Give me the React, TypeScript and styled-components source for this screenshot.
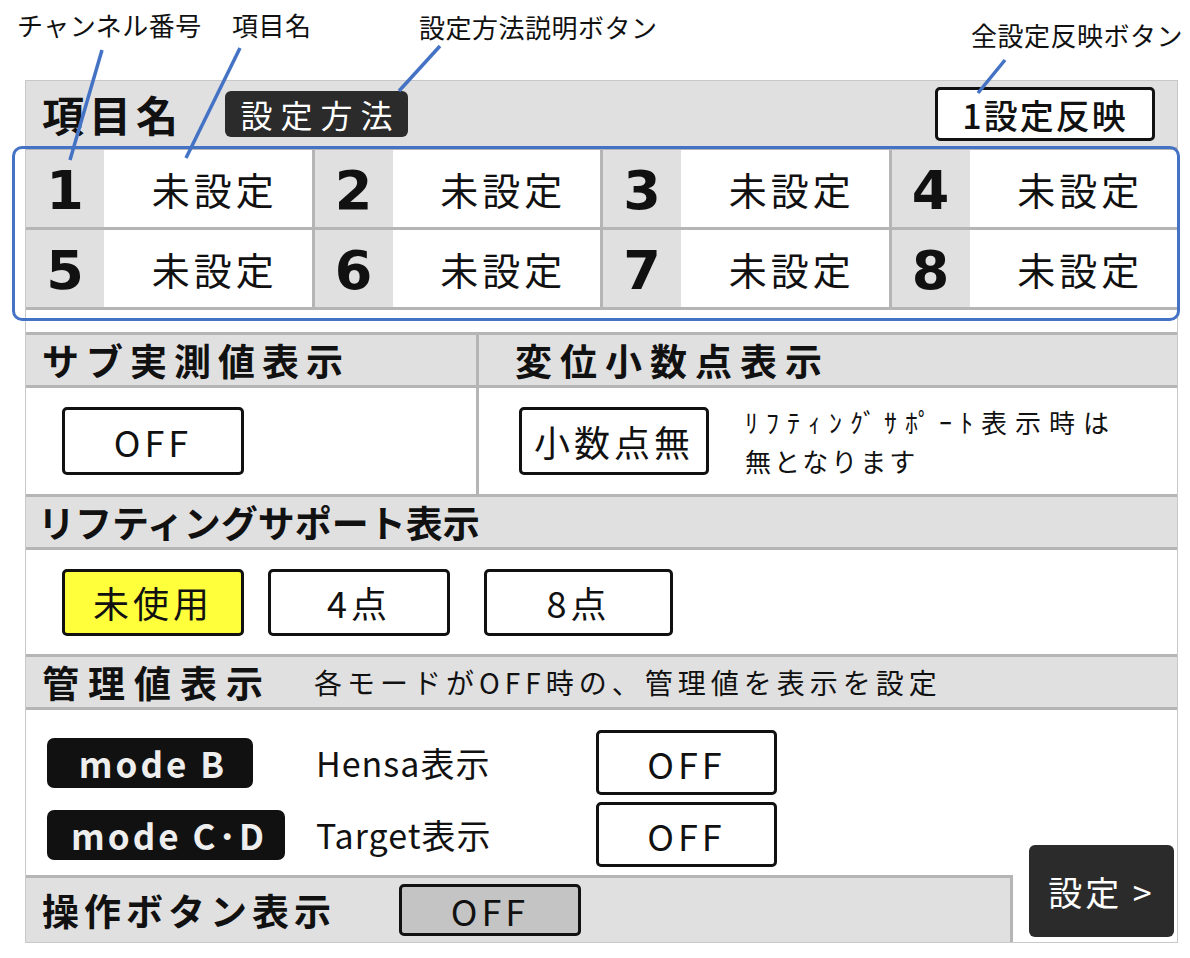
import React from "react";
import styled, { createGlobalStyle } from "styled-components";

const GlobalStyle = createGlobalStyle`
  html, body {
    margin: 0;
    padding: 0;
    background: #fff;
  }
  body {
    font-family: "Noto Sans CJK JP", "Noto Sans", sans-serif;
    color: #111;
  }
`;

const LINE = "#b5b5b5";
const BAR = "#e0e0e0";

const Page = styled.div`
  position: relative;
  width: 1190px;
  height: 958px;
  padding: 80px 0 0 25px;
  box-sizing: border-box;
  overflow: hidden;
`;

const Panel = styled.div`
  width: 1153px;
  border: 1px solid #c8c8c8;
  box-sizing: border-box;
  background: #fff;
`;

/* ---------- top bar ---------- */

const TopBar = styled.div`
  height: 66px;
  background: ${BAR};
  display: flex;
  align-items: center;
  padding: 0 22px 0 16px;
`;

const Title = styled.div<{ $spacing?: number }>`
  font-size: 37px;
  font-weight: 700;
  letter-spacing: ${(p) => p.$spacing ?? 7}px;
  line-height: 1;
  white-space: nowrap;
`;

const BigTitle = styled(Title)`
  font-size: 42px;
  letter-spacing: 5px;
`;

const DarkButton = styled.div`
  background: #2b2b2b;
  color: #fff;
  border-radius: 6px;
  display: flex;
  align-items: center;
  justify-content: center;
  white-space: nowrap;
`;

const HelpButton = styled(DarkButton)`
  margin-left: 42px;
  height: 46px;
  width: 183px;
  font-size: 32px;
  letter-spacing: 8px;
  padding-left: 8px;
  box-sizing: border-box;
`;

const ApplyButton = styled.div`
  margin-left: auto;
  width: 220px;
  height: 54px;
  box-sizing: border-box;
  border: 3px solid #111;
  border-radius: 5px;
  background: #fff;
  display: flex;
  align-items: center;
  justify-content: center;
  font-size: 34px;
  font-weight: 500;
  letter-spacing: 2px;
`;

/* ---------- channel grid ---------- */

const ChannelGrid = styled.div`
  display: grid;
  grid-template-columns: repeat(4, 1fr);
  grid-auto-rows: 77px;
  gap: 3px;
  background: ${LINE};
  border-top: 3px solid ${LINE};
  border-bottom: 3px solid ${LINE};
`;

const Channel = styled.div`
  display: flex;
`;

const ChannelNo = styled.div`
  width: 78px;
  background: ${BAR};
  display: flex;
  align-items: center;
  justify-content: center;
  padding-top: 4px;
  box-sizing: border-box;
  font-family: "DejaVu Sans", sans-serif;
  font-weight: 700;
  font-size: 54px;
`;

const ChannelName = styled.div`
  flex: 1;
  background: #fff;
  display: flex;
  align-items: center;
  justify-content: center;
  padding-left: 14px;
  font-size: 38px;
  letter-spacing: 4px;
`;

const Gap = styled.div`
  height: 22px;
`;

/* ---------- sections ---------- */

const SectionHeader = styled.div<{ $pad?: number }>`
  height: 50px;
  background: ${BAR};
  border-top: 3px solid ${LINE};
  border-bottom: 3px solid ${LINE};
  display: flex;
  align-items: center;
  padding-left: ${(p) => p.$pad ?? 16}px;
`;

const HeaderNote = styled.div`
  margin-left: 42px;
  font-size: 28px;
  letter-spacing: 5px;
  white-space: nowrap;
`;

const Split = styled.div`
  display: flex;
`;

const Column = styled.div<{ $width?: number; $divider?: boolean }>`
  display: flex;
  flex-direction: column;
  ${(p) => (p.$width ? `width: ${p.$width}px;` : "flex: 1;")}
  ${(p) => (p.$divider ? `border-left: 3px solid ${LINE};` : "")}
`;

const Body = styled.div<{ $height: number; $pad: number; $gap?: number }>`
  height: ${(p) => p.$height}px;
  display: flex;
  align-items: center;
  padding-left: ${(p) => p.$pad}px;
  gap: ${(p) => p.$gap ?? 0}px;
`;

const Toggle = styled.div<{ $w: number; $h?: number; $tone?: "yellow" | "gray" }>`
  width: ${(p) => p.$w}px;
  height: ${(p) => p.$h ?? 68}px;
  box-sizing: border-box;
  border: 3px solid #111;
  border-radius: 5px;
  background: ${(p) =>
    p.$tone === "yellow" ? "#ffff3c" : p.$tone === "gray" ? "#c4c4c4" : "#fff"};
  display: flex;
  align-items: center;
  justify-content: center;
  font-size: 36px;
  letter-spacing: 4px;
  white-space: nowrap;
  flex-shrink: 0;
`;

const Note = styled.div`
  margin-left: 36px;
  display: flex;
  flex-direction: column;
`;

const NoteLine = styled.div<{ $spacing: number }>`
  font-size: 26px;
  line-height: 39px;
  letter-spacing: ${(p) => p.$spacing}px;
  white-space: nowrap;
`;

/* ---------- management ---------- */

const ManageArea = styled.div`
  display: flex;
`;

const ManageLeft = styled.div`
  flex: 1;
  display: flex;
  flex-direction: column;
`;

const ManageRows = styled.div`
  height: 165px;
  box-sizing: border-box;
  padding: 20px 0 0 21px;
  display: grid;
  grid-template-columns: 269px 280px 181px;
  grid-auto-rows: 65px;
  row-gap: 7px;
  align-items: center;
`;

const ModeTag = styled.div<{ $w: number }>`
  justify-self: start;
  width: ${(p) => p.$w}px;
  height: 50px;
  box-sizing: border-box;
  padding-left: 6px;
  background: #111;
  color: #eee;
  border-radius: 7px;
  display: flex;
  align-items: center;
  justify-content: center;
  font-size: 35px;
  font-weight: 700;
  letter-spacing: 3px;
  white-space: nowrap;
`;

const RowLabel = styled.div`
  font-size: 34px;
  letter-spacing: 1px;
  white-space: nowrap;
`;

const BottomBar = styled.div`
  height: 64px;
  background: ${BAR};
  border-top: 3px solid ${LINE};
  border-right: 3px solid ${LINE};
  display: flex;
  align-items: center;
  padding-left: 16px;
  gap: 63px;
`;

const ManageRight = styled.div`
  width: 164px;
  display: flex;
  align-items: flex-end;
  justify-content: flex-end;
  padding: 0 3px 5px 0;
  box-sizing: border-box;
`;

const SubmitButton = styled(DarkButton)`
  width: 145px;
  height: 92px;
  font-size: 34px;
  letter-spacing: 3px;
`;

/* ---------- callouts ---------- */

const CalloutText = styled.div<{ $x: number; $y: number }>`
  position: absolute;
  left: ${(p) => p.$x}px;
  top: ${(p) => p.$y}px;
  font-size: 26px;
  letter-spacing: 0.5px;
  line-height: 30px;
  color: #111;
  white-space: nowrap;
`;

const CalloutFrame = styled.div`
  position: absolute;
  left: 12px;
  top: 146px;
  width: 1168px;
  height: 175px;
  box-sizing: border-box;
  border: 3.5px solid #4472c4;
  border-radius: 10px;
  pointer-events: none;
`;

const CalloutLines = styled.svg`
  position: absolute;
  left: 0;
  top: 0;
  pointer-events: none;
`;

const callouts = [
  { text: "チャンネル番号", x: 17, y: 10 },
  { text: "項目名", x: 232, y: 10 },
  { text: "設定方法説明ボタン", x: 419, y: 12 },
  { text: "全設定反映ボタン", x: 971, y: 20 },
];

const leaders = [
  [102, 50, 70, 160],
  [240, 48, 186, 158],
  [440, 46, 399, 91],
  [1005, 60, 978, 93],
];

const channels = [1, 2, 3, 4, 5, 6, 7, 8];

export default function App() {
  return (
    <>
      <GlobalStyle />
      <Page>
        <Panel>
          <TopBar>
            <BigTitle>項目名</BigTitle>
            <HelpButton>設定方法</HelpButton>
            <ApplyButton>1設定反映</ApplyButton>
          </TopBar>

          <ChannelGrid>
            {channels.map((n) => (
              <Channel key={n}>
                <ChannelNo>{n}</ChannelNo>
                <ChannelName>未設定</ChannelName>
              </Channel>
            ))}
          </ChannelGrid>

          <Gap />

          <Split>
            <Column $width={450}>
              <SectionHeader>
                <Title>サブ実測値表示</Title>
              </SectionHeader>
              <Body $height={106} $pad={36}>
                <Toggle $w={182}>OFF</Toggle>
              </Body>
            </Column>
            <Column $divider>
              <SectionHeader $pad={36}>
                <Title $spacing={8}>変位小数点表示</Title>
              </SectionHeader>
              <Body $height={106} $pad={40}>
                <Toggle $w={190}>小数点無</Toggle>
                <Note>
                  <NoteLine $spacing={8}>ﾘﾌﾃｨﾝｸﾞｻﾎﾟｰﾄ表示時は</NoteLine>
                  <NoteLine $spacing={3}>無となります</NoteLine>
                </Note>
              </Body>
            </Column>
          </Split>

          <SectionHeader $pad={12}>
            <Title $spacing={0}>リフティングサポート表示</Title>
          </SectionHeader>
          <Body $height={104} $pad={36} $gap={24}>
            <Toggle $w={182} $h={67} $tone="yellow">
              未使用
            </Toggle>
            <Toggle $w={182} $h={67}>
              4点
            </Toggle>
            <Toggle $w={189} $h={67} style={{ marginLeft: 10 }}>
              8点
            </Toggle>
          </Body>

          <SectionHeader>
            <Title $spacing={9}>管理値表示</Title>
            <HeaderNote>各モードがOFF時の、管理値を表示を設定</HeaderNote>
          </SectionHeader>
          <ManageArea>
            <ManageLeft>
              <ManageRows>
                <ModeTag $w={206}>mode B</ModeTag>
                <RowLabel>Hensa表示</RowLabel>
                <Toggle $w={181} $h={65}>
                  OFF
                </Toggle>
                <ModeTag $w={238}>mode C･D</ModeTag>
                <RowLabel>Target表示</RowLabel>
                <Toggle $w={181} $h={65}>
                  OFF
                </Toggle>
              </ManageRows>
              <BottomBar>
                <Title $spacing={5}>操作ボタン表示</Title>
                <Toggle $w={182} $h={52} $tone="gray">
                  OFF
                </Toggle>
              </BottomBar>
            </ManageLeft>
            <ManageRight>
              <SubmitButton>設定 &gt;</SubmitButton>
            </ManageRight>
          </ManageArea>
        </Panel>

        {callouts.map((c) => (
          <CalloutText key={c.text} $x={c.x} $y={c.y}>
            {c.text}
          </CalloutText>
        ))}
        <CalloutFrame />
        <CalloutLines width={1190} height={958}>
          {leaders.map(([x1, y1, x2, y2], i) => (
            <line
              key={i}
              x1={x1}
              y1={y1}
              x2={x2}
              y2={y2}
              stroke="#4472c4"
              strokeWidth={3.5}
            />
          ))}
        </CalloutLines>
      </Page>
    </>
  );
}
